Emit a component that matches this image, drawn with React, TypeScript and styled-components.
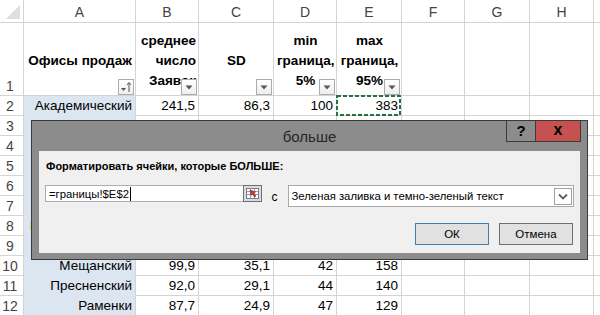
import React from 'react';
import styled, { createGlobalStyle } from 'styled-components';

const Global = createGlobalStyle`
  html, body { margin: 0; padding: 0; background: #fff; overflow: hidden; }
  body { font-family: "Liberation Sans", Arial, sans-serif; }
`;

const Stage = styled.div`
  position: relative;
  width: 600px;
  height: 315px;
  overflow: hidden;
`;

const Sheet = styled.div`
  display: grid;
  grid-template-columns: 24px 112px 63px 75px 63px 65px 63px 65px 64px 40px;
  grid-template-rows: 23px 73px repeat(11, 20px);
  font-size: 13.5px;
  color: #000;
`;

const Corner = styled.div`
  box-sizing: border-box;
  border-right: 1px solid #d4d4d4;
  border-bottom: 1px solid #d4d4d4;
  position: relative;
`;

const ColHead = styled.div`
  box-sizing: border-box;
  border-right: 1px solid #d4d4d4;
  border-bottom: 1px solid #d4d4d4;
  display: flex;
  align-items: center;
  justify-content: center;
  color: #444;
  font-size: 14px;
  padding-top: 1px;
`;

const RowHead = styled.div<{ $bottom?: boolean }>`
  box-sizing: border-box;
  border-right: 1px solid #d4d4d4;
  border-bottom: 1px solid #d4d4d4;
  display: flex;
  align-items: ${p => (p.$bottom ? 'flex-end' : 'center')};
  justify-content: center;
  color: #444;
  font-size: 14px;
  padding-bottom: ${p => (p.$bottom ? '1px' : '0')};
  padding-right: 3px;
`;

type CellProps = {
  $align?: 'left' | 'right' | 'center';
  $fill?: boolean;
  $selected?: boolean;
};

const Cell = styled.div<CellProps>`
  position: relative;
  z-index: ${p => (p.$selected ? 2 : 'auto')};
  box-sizing: border-box;
  border-right: 1px solid #d4d4d4;
  border-bottom: 1px solid ${p => (p.$fill ? '#dce6f1' : '#d4d4d4')};
  background: ${p => (p.$fill ? '#dce6f1' : '#fff')};
  padding: 0 3px 0 4px;
  display: flex;
  align-items: center;
  justify-content: ${p => (p.$align === 'right' ? 'flex-end' : p.$align === 'center' ? 'center' : 'flex-start')};
  white-space: nowrap;
  overflow: ${p => (p.$selected ? 'visible' : 'hidden')};
  line-height: 19px;
`;

const HeadCell = styled.div<{ $align: 'right' | 'center' }>`
  position: relative;
  box-sizing: border-box;
  border-right: 1px solid #d4d4d4;
  border-bottom: 1px solid #d4d4d4;
  padding: 3px 2px 0 3px;
  display: flex;
  flex-direction: column;
  justify-content: center;
  text-align: ${p => p.$align};
  font-weight: 700;
  line-height: 20px;
  white-space: nowrap;
  overflow: hidden;
`;

const HiddenNote = styled.span`
  color: #c65911;
  font-weight: 700;
  padding-left: 2px;
`;

const FilterBtn = styled.div`
  position: absolute;
  right: 1px;
  bottom: 0;
  width: 16px;
  height: 16px;
  box-sizing: border-box;
  border: 1px solid #acacac;
  background: linear-gradient(#ffffff, #eeeeee);
  display: flex;
  align-items: center;
  justify-content: center;
`;

const Marquee = styled.svg`
  position: absolute;
  left: -1px;
  top: -1px;
  width: 65px;
  height: 21px;
  pointer-events: none;
`;

/* ---------- dialog ---------- */

const Dialog = styled.div`
  position: absolute;
  z-index: 5;
  left: 31px;
  top: 120px;
  width: 557px;
  height: 140px;
  box-sizing: border-box;
  border: 1px solid #3a3a3a;
  background: #8c8c8c;
  padding: 0 7px 6px 7px;
  display: flex;
  flex-direction: column;
  font-family: "Liberation Sans", Arial, sans-serif;
`;

const TitleBar = styled.div`
  height: 30px;
  display: grid;
  grid-template-columns: 1fr auto 1fr;
  align-items: center;
`;

const Title = styled.div`
  grid-column: 2;
  font-size: 15px;
  color: #262626;
  padding-top: 1px;
`;

const WinButtons = styled.div`
  grid-column: 3;
  justify-self: end;
  align-self: start;
  display: flex;
  margin-right: -1px;
`;

const WinBtn = styled.div<{ $close?: boolean }>`
  height: 21px;
  width: ${p => (p.$close ? '45px' : '30px')};
  box-sizing: border-box;
  border: 1px solid #3a3a3a;
  border-top: none;
  border-left: ${p => (p.$close ? 'none' : '1px solid #3a3a3a')};
  background: ${p => (p.$close ? '#c75050' : 'transparent')};
  display: flex;
  align-items: center;
  justify-content: center;
  font-weight: 700;
  font-size: ${p => (p.$close ? '16px' : '15px')};
  color: #000;
  padding-bottom: 2px;
`;

const Panel = styled.div`
  flex: 1;
  background: #f0f0f0;
  padding: 7px 6px 8px 7px;
  display: flex;
  flex-direction: column;
`;

const Label = styled.div`
  font-size: 11px;
  font-weight: 700;
  line-height: 16px;
  color: #000;
`;

const InputRow = styled.div`
  margin-top: 11px;
  display: flex;
  align-items: flex-start;
  height: 22px;
`;

const RefInput = styled.div`
  margin-left: -1px;
  width: 217px;
  height: 17px;
  box-sizing: border-box;
  border: 1px solid #abadb3;
  border-right: none;
  background: #fff;
  display: flex;
  align-items: center;
  font-size: 11.3px;
  padding-left: 3px;
`;

const Caret = styled.span`
  display: inline-block;
  width: 1px;
  height: 14px;
  background: #000;
  margin-left: 1px;
`;

const InputText = styled.span`
  flex: 1;
  display: flex;
  align-items: center;
`;

const CLabel = styled.div`
  width: 26px;
  box-sizing: border-box;
  padding: 5px 0 0 10px;
  font-size: 12px;
`;

const Select = styled.div`
  width: 287px;
  height: 22px;
  box-sizing: border-box;
  border: 1px solid #a9a9a9;
  background: #fff;
  display: flex;
  align-items: center;
  font-size: 11.3px;
  padding: 0 1px 0 3px;
`;

const SelectText = styled.span`
  flex: 1;
`;

const SelectArrow = styled.div`
  width: 18px;
  height: 17px;
  box-sizing: border-box;
  border: 1px solid #a0a0a0;
  display: flex;
  align-items: center;
  justify-content: center;
`;

const ButtonRow = styled.div`
  margin-top: auto;
  display: flex;
  justify-content: flex-end;
  gap: 10px;
  padding-right: 1px;
`;

const Button = styled.div<{ $default?: boolean }>`
  width: 74px;
  height: 22px;
  box-sizing: border-box;
  border: 1px solid ${p => (p.$default ? '#3c7fb1' : '#707070')};
  background: #e1e1e1;
  display: flex;
  align-items: center;
  justify-content: center;
  font-size: 11.5px;
  color: #000;
`;

const DownTri = () => (
  <svg width="8" height="5" viewBox="0 0 8 5">
    <path d="M0.5 0.5 H7.5 L4 4.5 Z" fill="#555" />
  </svg>
);

const SortIcon = () => (
  <svg width="12" height="12" viewBox="0 0 12 12">
    <path d="M1 7 H6 L3.5 10 Z" fill="#555" />
    <path d="M9 11 V2" stroke="#555" strokeWidth="1" />
    <path d="M7 4 L9 1.5 L11 4" stroke="#555" strokeWidth="1" fill="none" />
  </svg>
);

const RefIcon = () => (
  <svg width="19" height="17" viewBox="0 0 19 17">
    <rect x="0.5" y="0.5" width="18" height="16" fill="#dcdcdc" stroke="#707070" />
    <rect x="3.5" y="3.5" width="12" height="10" fill="#fff" stroke="#6b7f9c" />
    <path d="M3.5 6.5 H15.5 M3.5 9.5 H15.5 M7.5 3.5 V13.5 M11.5 3.5 V13.5" stroke="#8aa0bf" />
    <path d="M7 5 L12.5 7 L10.5 8 L13 11 L11.5 12 L9.5 9 L8 10.5 Z" fill="#d43a2a" stroke="#a01c10" strokeWidth="0.6" />
  </svg>
);

const Chevron = () => (
  <svg width="10" height="7" viewBox="0 0 10 7">
    <path d="M1 1.5 L5 5.5 L9 1.5" stroke="#5f5f5f" strokeWidth="1.8" fill="none" />
  </svg>
);

const COL_LETTERS = ['A', 'B', 'C', 'D', 'E', 'F', 'G', 'H', ''];

type Row = { n: number; a: string; b: string; c: string; d: string; e: string; note?: boolean };

const ROWS: Row[] = [
  { n: 2, a: 'Академический', b: '241,5', c: '86,3', d: '100', e: '383' },
  { n: 3, a: '', b: '', c: '', d: '', e: '' },
  { n: 4, a: '', b: '', c: '', d: '', e: '' },
  { n: 5, a: '', b: '', c: '', d: '', e: '' },
  { n: 6, a: '', b: '', c: '', d: '', e: '' },
  { n: 7, a: '', b: '', c: '', d: '', e: '' },
  { n: 8, a: '', b: '', c: '', d: '', e: '', note: true },
  { n: 9, a: '', b: '', c: '', d: '', e: '' },
  { n: 10, a: 'Мещанский', b: '99,9', c: '35,1', d: '42', e: '158' },
  { n: 11, a: 'Пресненский', b: '92,0', c: '29,1', d: '44', e: '140' },
  { n: 12, a: 'Раменки', b: '87,7', c: '24,9', d: '47', e: '129' },
];

export default function App() {
  return (
    <Stage>
      <Global />
      <Sheet>
        <Corner>
          <svg width="23" height="22" viewBox="0 0 23 22" style={{ position: 'absolute', left: 0, top: 0 }}>
            <path d="M6 19 H20 V5 Z" fill="#dfdfdf" />
          </svg>
        </Corner>
        {COL_LETTERS.map((l, i) => (
          <ColHead key={i}>{l}</ColHead>
        ))}

        <RowHead $bottom>1</RowHead>
        <HeadCell $align="center">
          Офисы продаж
          <FilterBtn>
            <SortIcon />
          </FilterBtn>
        </HeadCell>
        <HeadCell $align="right">
          <span>среднее</span>
          <span>число</span>
          <span>Заявок</span>
          <FilterBtn>
            <DownTri />
          </FilterBtn>
        </HeadCell>
        <HeadCell $align="center">
          SD
          <FilterBtn>
            <DownTri />
          </FilterBtn>
        </HeadCell>
        <HeadCell $align="center">
          <span>min</span>
          <span>граница,</span>
          <span>5%</span>
          <FilterBtn>
            <DownTri />
          </FilterBtn>
        </HeadCell>
        <HeadCell $align="center">
          <span>max</span>
          <span>граница,</span>
          <span>95%</span>
          <FilterBtn>
            <DownTri />
          </FilterBtn>
        </HeadCell>
        <Cell />
        <Cell />
        <Cell />
        <Cell />

        {ROWS.map(r => (
          <React.Fragment key={r.n}>
            <RowHead>{r.n}</RowHead>
            <Cell $fill $align={r.note ? 'left' : 'right'}>
              {r.note ? <HiddenNote>Итого</HiddenNote> : r.a}
            </Cell>
            <Cell $align="right">{r.b}</Cell>
            <Cell $align="right">{r.c}</Cell>
            <Cell $align="right">{r.d}</Cell>
            <Cell $align="right" $selected={r.n === 2}>
              {r.e}
              {r.n === 2 && (
                <Marquee viewBox="0 0 65 21">
                  <rect x="1" y="1" width="63" height="19" fill="none" stroke="#217346" strokeWidth="2" strokeDasharray="4 2" />
                </Marquee>
              )}
            </Cell>
            <Cell />
            <Cell />
            <Cell />
            <Cell />
          </React.Fragment>
        ))}
      </Sheet>

      <Dialog>
        <TitleBar>
          <Title>больше</Title>
          <WinButtons>
            <WinBtn>?</WinBtn>
            <WinBtn $close>x</WinBtn>
          </WinButtons>
        </TitleBar>
        <Panel>
          <Label>Форматировать ячейки, которые БОЛЬШЕ:</Label>
          <InputRow>
            <RefInput>
              <InputText>
                =границы!$E$2
                <Caret />
              </InputText>
              <RefIcon />
            </RefInput>
            <CLabel>с</CLabel>
            <Select>
              <SelectText>Зеленая заливка и темно-зеленый текст</SelectText>
              <SelectArrow>
                <Chevron />
              </SelectArrow>
            </Select>
          </InputRow>
          <ButtonRow>
            <Button $default>ОК</Button>
            <Button>Отмена</Button>
          </ButtonRow>
        </Panel>
      </Dialog>
    </Stage>
  );
}
